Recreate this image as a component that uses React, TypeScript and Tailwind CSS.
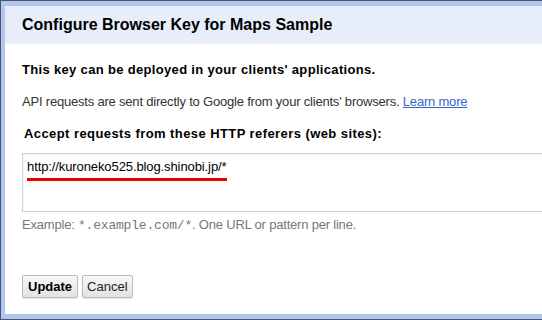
export default function App() {
  return (
    <div className="w-[542px] h-[320px] overflow-hidden bg-[#4b5568] pt-px pl-px pb-px font-['Liberation_Sans',Arial,sans-serif]">
      <div className="h-full bg-[#b3c6f1] pt-[5px] pl-[4px] pb-[5px]">
        <div className="h-full bg-white flex flex-col">
          <div className="h-[38px] bg-[#e8eef9] flex items-center pl-[17px] border-b border-[#eef2fa]">
            <h1 className="text-[16px] font-bold text-black">Configure Browser Key for Maps Sample</h1>
          </div>

          <div className="flex flex-col pl-[17px] text-[13px]">
            <p className="mt-[18px] font-bold text-black leading-[15px] tracking-[0.33px]">
              This key can be deployed in your clients' applications.
            </p>
            <p className="mt-[17px] text-[#333] leading-[15px] tracking-[-0.2px]">
              API requests are sent directly to Google from your clients' browsers.{' '}
              <a className="text-[#3366cc] underline">Learn more</a>
            </p>
            <p className="mt-[17px] pl-[2px] font-bold text-black leading-[15px] tracking-[0.42px]">
              Accept requests from these HTTP referers (web sites):
            </p>

            <div className="mt-[12px] w-[540px] h-[59px] border border-[#c4d3ea] shadow-[inset_0_1px_2px_rgba(0,0,0,0.08)] pl-[4px] pt-[3px]">
              <div className="inline-block">
                <span className="block text-black leading-[15px] tracking-[-0.1px]">http://kuroneko525.blog.shinobi.jp/*</span>
                <div className="mt-[4px] h-[3px] bg-[#ee0000]" />
              </div>
            </div>

            <p className="mt-[5px] text-[#777] leading-[15px] tracking-[-0.2px]">
              Example: <span className="font-['Liberation_Mono',monospace]">*.example.com/*</span>. One URL or pattern per line.
            </p>

            <div className="mt-[42px] flex gap-[4px]">
              <button className="h-[23px] px-[5px] border border-[#bbb] rounded-[2px] bg-gradient-to-b from-[#f8f8f8] to-[#e2e2e2] font-bold text-black text-[13px] shadow-[0_1px_1px_rgba(0,0,0,0.1)]">
                Update
              </button>
              <button className="h-[23px] px-[4px] border border-[#bbb] rounded-[2px] bg-gradient-to-b from-[#f8f8f8] to-[#e2e2e2] text-[#222] text-[13px] shadow-[0_1px_1px_rgba(0,0,0,0.1)]">
                Cancel
              </button>
            </div>
          </div>
        </div>
      </div>
    </div>
  );
}
